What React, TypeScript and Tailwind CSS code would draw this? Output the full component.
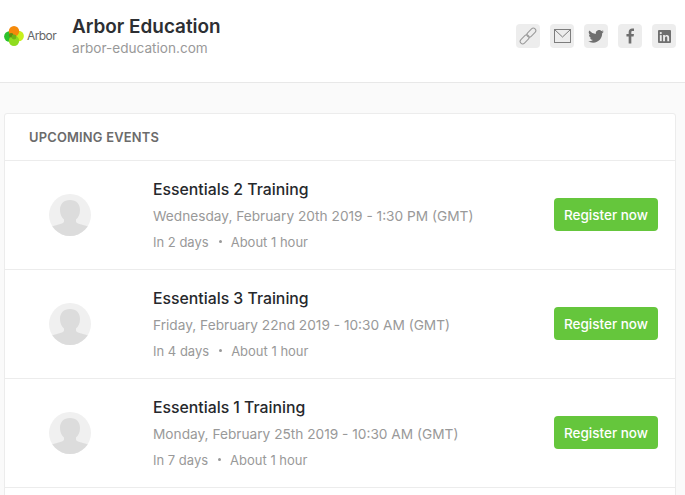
import React from "react";

const events = [
  { title: "Essentials 2 Training", date: "Wednesday, February 20th 2019 - 1:30 PM (GMT)", rel: "In 2 days" },
  { title: "Essentials 3 Training", date: "Friday, February 22nd 2019 - 10:30 AM (GMT)", rel: "In 4 days" },
  { title: "Essentials 1 Training", date: "Monday, February 25th 2019 - 10:30 AM (GMT)", rel: "In 7 days" },
];

function IconBox({ children }: { children: React.ReactNode }) {
  return <div className="w-6 h-6 rounded-[4px] bg-[#ededed] flex items-center justify-center">{children}</div>;
}

function Avatar() {
  return (
    <div className="w-[42px] h-[42px] rounded-full bg-[#f0f0f0] overflow-hidden">
      <svg width="42" height="42" viewBox="0 0 42 42">
        <path d="M21 6c-6.500 0-10 4-10 10 0 4 1.500 7.500 4 9.500v2c0 1.500-3 2.500-7 3.500-2 .5-4 1-6 2v9h38v-9c-2-1-4-1.500-6-2-4-1-7-2-7-3.500v-2c2.500-2 4-5.500 4-9.500 0-6-3.500-10-10-10z" fill="#dcdcdc" />
      </svg>
    </div>
  );
}

export default function App() {
  return (
    <div className="w-[685px] h-[495px] overflow-hidden bg-[#fafafa] font-['Inter',sans-serif]">
      <header className="h-[83px] bg-white border-b border-[#e8e8e8] flex items-start">
        <div className="w-[72px] pl-1 pt-[26px] shrink-0 flex items-center">
          <svg width="20" height="20" viewBox="0 0 20 20" className="shrink-0">
            <circle cx="5.300" cy="10.500" r="5.200" fill="#2cc22c" />
            <circle cx="14.700" cy="10" r="5.200" fill="#c8f01c" />
            <circle cx="10" cy="14.800" r="5.200" fill="#8fdc1e" />
            <circle cx="10" cy="5.200" r="5.200" fill="#f58a0b" />
            <circle cx="7.200" cy="9.200" r="2.300" fill="#5f8f14" />
            <circle cx="10" cy="11" r="2.400" fill="#6fb516" />
          </svg>
          <span className="ml-[3px] text-[12px] leading-none tracking-[-0.6px] text-[#666]">Arbor</span>
        </div>
        <div className="pt-[15px]">
          <div className="text-[18.900px] leading-[24px] font-semibold text-[#2d2f33]">Arbor Education</div>
          <div className="text-[13.600px] leading-[19px] text-[#999]">arbor-education.com</div>
        </div>
        <div className="ml-auto mr-[9px] mt-6 flex gap-[10px]">
          <IconBox>
            <svg width="18" height="18" viewBox="0 0 18 18" fill="none" stroke="#999" strokeWidth="1" className="overflow-visible">
              <g transform="rotate(-45 9 9)">
                <rect x="-1" y="6.500" width="10.500" height="5" rx="2.500" />
                <rect x="8.500" y="6.500" width="10.500" height="5" rx="2.500" />
              </g>
            </svg>
          </IconBox>
          <IconBox>
            <svg width="17" height="14" viewBox="0 0 17 14" fill="none" stroke="#7d7d7d" strokeWidth="1">
              <rect x="0.500" y="0.500" width="16" height="13" />
              <path d="M0.500 0.500 8.500 8l8-7.500" />
            </svg>
          </IconBox>
          <IconBox>
            <svg width="16" height="13" viewBox="0 0 24 20" fill="#6f6f6f">
              <path d="M24 2.400a9.800 9.800 0 0 1-2.800.8A4.900 4.900 0 0 0 23.300.5a9.800 9.800 0 0 1-3.100 1.200 4.900 4.900 0 0 0-8.400 4.500A14 14 0 0 1 1.700.9a4.900 4.900 0 0 0 1.500 6.600 4.900 4.900 0 0 1-2.200-.6v.1a4.900 4.900 0 0 0 3.900 4.800 4.900 4.900 0 0 1-2.200.1 4.900 4.900 0 0 0 4.600 3.400A9.900 9.900 0 0 1 0 17.300 14 14 0 0 0 7.500 19.500c9.100 0 14-7.500 14-14v-.6A10 10 0 0 0 24 2.400z" />
            </svg>
          </IconBox>
          <IconBox>
            <svg width="8" height="16" viewBox="0 0 9 17" fill="#6f6f6f">
              <path d="M6 17V9.200h2.500L9 6.200H6V4.500c0-.9.300-1.500 1.500-1.500H9V.2C8.700.1 7.900 0 6.900 0 4.700 0 3 1.400 3 4.100v2.100H.5v3H3V17z" />
            </svg>
          </IconBox>
          <IconBox>
            <svg width="13" height="13" viewBox="0 0 14 14">
              <rect width="14" height="14" rx="1" fill="#6f6f6f" />
              <rect x="2" y="5.500" width="2" height="6.500" fill="#ededed" />
              <circle cx="3" cy="3.300" r="1.200" fill="#ededed" />
              <path d="M5.500 5.500h1.900v.9c.4-.6 1.100-1.100 2.100-1.100 1.800 0 2.500 1.100 2.500 3V12h-2V8.700c0-.9-.2-1.600-1.100-1.600s-1.400.7-1.400 1.600V12h-2z" fill="#ededed" />
            </svg>
          </IconBox>
        </div>
      </header>
      <main className="mx-1 mr-[9px] mt-[30px] h-[420px] bg-white border border-[#ececec] rounded-[3px]">
        <div className="h-[47px] pl-6 pt-[1px] flex items-center border-b border-[#ececec] text-[12.900px] font-semibold tracking-[0.2px] text-[#6b6b6b]">
          UPCOMING EVENTS
        </div>
        {events.map((e) => (
          <div key={e.title} className="h-[109px] border-b border-[#ececec] flex items-center">
            <div className="w-[148px] shrink-0 pl-11">
              <Avatar />
            </div>
            <div className="flex-1 min-w-0 pt-[1px]">
              <div className="text-[15.800px] leading-[20px] font-medium text-[#26282c]">{e.title}</div>
              <div className="mt-[6px] text-[13.700px] leading-[20px] text-[#999]">{e.date}</div>
              <div className="mt-[6px] text-[13px] leading-[20px] text-[#999] flex items-center">
                <span>{e.rel}</span>
                <span className="ml-[10px] mr-[9px] w-[3px] h-[3px] rounded-full bg-[#999]" />
                <span>About 1 hour</span>
              </div>
            </div>
            <button className="mr-[17px] mb-[1px] pt-[1px] w-[104px] h-[33px] rounded-[4px] bg-[#65c63c] text-white text-[13.500px] font-medium">
              Register now
            </button>
          </div>
        ))}
      </main>
    </div>
  );
}
